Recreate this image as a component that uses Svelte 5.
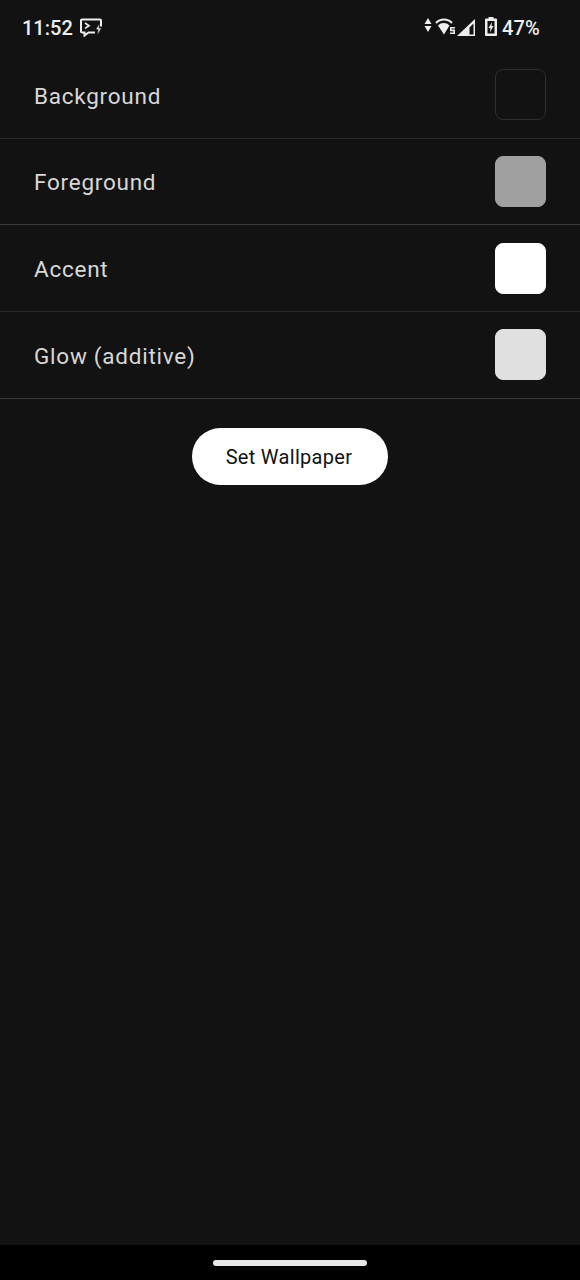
<script>
  const rows = [
    { label: 'Background', color: '#121212', edge: '#2e2e2e' },
    { label: 'Foreground', color: '#a0a0a0', edge: '#a0a0a0' },
    { label: 'Accent', color: '#ffffff', edge: '#ffffff' },
    { label: 'Glow (additive)', color: '#e0e0e0', edge: '#e0e0e0' }
  ];
</script>

<div class="screen">
  <header class="status">
    <div class="left">
      <span class="time">11:52</span>
      <svg class="pic" width="23" height="19" viewBox="0 0 23 19" fill="none" stroke="#eee">
        <path d="M15 14.500h-6.500l-4 3v-3h-2.500a1 1 0 0 1-1-1v-11a1 1 0 0 1 1-1h18a1 1 0 0 1 1 1v6" stroke-width="2"/>
        <path d="M5 5l4 2.700-4 2.700" stroke-width="1.700"/>
        <path d="M19.500 5.500l-3.800 6h2.500l-1 6 4.300-7.500h-2.500z" fill="#eee" stroke="#121212" stroke-width="0.600"/>
      </svg>
    </div>
    <div class="right">
      <svg class="arrows" width="8" height="15" viewBox="0 0 8 15" fill="#eee"><path d="M4 0l3.500 6h-7zM4 14l-3.500-6h7z"/></svg>
      <svg class="wifi" width="21" height="18" viewBox="0 0 21 18">
        <path d="M1 6a11 11 0 0 1 16 0" fill="none" stroke="#eee" stroke-width="2" transform="translate(0 -1)"/>
        <path d="M3 7.500a8 8 0 0 1 11.500 0l-5.500 9z" fill="#eee"/>
        <path d="M15 9h5v1.400h-3.500v1.200h3.500v4.400h-5v-1.400h3.500v-1.400h-3.500z" fill="#eee"/>
      </svg>
      <svg class="signal" width="18" height="17" viewBox="0 0 18 17"><path fill-rule="evenodd" d="M18 0v17h-18zM16.500 4.500l-4 4v7h4z" fill="#eee"/></svg>
      <svg class="batt" width="12" height="19" viewBox="0 0 12 19">
        <path fill-rule="evenodd" d="M3.500 0h5v1.500h2.500a1 1 0 0 1 1 1v15.500a1 1 0 0 1-1 1h-10a1 1 0 0 1-1-1v-15.500a1 1 0 0 1 1-1h2.500zM2.500 4v12.500h7v-12.500z" fill="#eee"/>
        <path d="M7 5l-3.500 6h2l-.7 4.500 3.700-6.500h-2z" fill="#eee"/>
      </svg>
      <span class="pct">47%</span>
    </div>
  </header>

  <main class="list">
    {#each rows as row}
      <div class="row">
        <span class="label">{row.label}</span>
        <span class="swatch" style="background:{row.color};border-color:{row.edge}"></span>
      </div>
    {/each}
  </main>

  <div class="action">
    <button class="cta">Set Wallpaper</button>
  </div>

  <div class="spacer"></div>

  <footer class="nav"><span class="pill"></span></footer>
</div>

<style>
  :global(body) { margin: 0; background: #121212; }
  .screen {
    width: 580px;
    height: 1280px;
    display: flex;
    flex-direction: column;
    background: #121212;
    font-family: Roboto, "Liberation Sans", sans-serif;
    overflow: hidden;
  }
  .status {
    height: 52px;
    flex: none;
    box-sizing: border-box;
    padding: 3px 40px 0 22px;
    display: flex;
    align-items: center;
    justify-content: space-between;
    color: #eee;
    font-size: 20px;
  }
  .left, .right { display: flex; align-items: center; }
  .time { font-weight: 500; }
  .pic { margin-left: 7px; }
  .right svg { flex: none; }
  .arrows { margin-bottom: 4px; }
  .wifi { margin-left: 3px; margin-bottom: 1px; }
  .signal { margin-left: 1px; margin-bottom: 1px; }
  .batt { margin-left: 10px; margin-bottom: 2px; }
  .pct { margin-left: 5px; font-weight: 500; letter-spacing: 0.2px; }
  .row {
    height: 86.667px;
    box-sizing: border-box;
    display: flex;
    align-items: center;
    justify-content: space-between;
    padding: 0 34px;
    border-bottom: 1px solid #2a2a2a;
  }
  .row:nth-child(even) { border-bottom-color: #3a3a3a; }
  .label {
    color: #d8d8d8;
    font-size: 22.5px;
    letter-spacing: 0.75px;
    margin-top: 2px;
  }
  .swatch {
    width: 51px;
    height: 51px;
    box-sizing: border-box;
    border: 1.5px solid;
    border-radius: 8px;
  }
  .action {
    display: flex;
    justify-content: center;
    padding-top: 29px;
  }
  .cta {
    width: 196px;
    height: 57px;
    border: 0;
    border-radius: 29px;
    background: #fff;
    color: #111;
    font: 400 20px Roboto, "Liberation Sans", sans-serif;
    letter-spacing: 0.3px;
    padding: 2px 2px 0 0;
  }
  .spacer { flex: 1; }
  .nav {
    height: 35px;
    flex: none;
    background: #000;
    display: flex;
    justify-content: center;
    padding-top: 15px;
    box-sizing: border-box;
  }
  .pill {
    width: 154px;
    height: 6px;
    border-radius: 3px;
    background: #e8e8e8;
  }
</style>
